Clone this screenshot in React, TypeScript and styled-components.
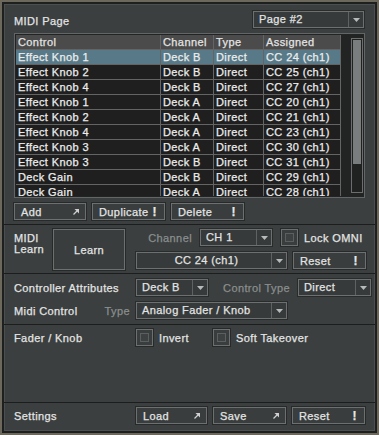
import React from 'react';
import styled, { createGlobalStyle } from 'styled-components';

const GlobalStyle = createGlobalStyle`
  html, body {
    margin: 0;
    padding: 0;
    background: #6c695c;
  }
  body {
    font-family: "Liberation Sans", Arial, sans-serif;
    font-size: 11px;
    letter-spacing: 0.4px;
    -webkit-text-stroke: 0.25px currentColor;
    color: #e4e4e4;
  }
`;

type Row = { control: string; channel: string; type: string; assigned: string };

const rows: Row[] = [
    { control: 'Effect Knob 1', channel: 'Deck B', type: 'Direct', assigned: 'CC 24 (ch1)' },
    { control: 'Effect Knob 2', channel: 'Deck B', type: 'Direct', assigned: 'CC 25 (ch1)' },
    { control: 'Effect Knob 4', channel: 'Deck B', type: 'Direct', assigned: 'CC 27 (ch1)' },
    { control: 'Effect Knob 1', channel: 'Deck A', type: 'Direct', assigned: 'CC 20 (ch1)' },
    { control: 'Effect Knob 2', channel: 'Deck A', type: 'Direct', assigned: 'CC 21 (ch1)' },
    { control: 'Effect Knob 4', channel: 'Deck A', type: 'Direct', assigned: 'CC 23 (ch1)' },
    { control: 'Effect Knob 3', channel: 'Deck A', type: 'Direct', assigned: 'CC 30 (ch1)' },
    { control: 'Effect Knob 3', channel: 'Deck B', type: 'Direct', assigned: 'CC 31 (ch1)' },
    { control: 'Deck Gain', channel: 'Deck B', type: 'Direct', assigned: 'CC 29 (ch1)' },
    { control: 'Deck Gain', channel: 'Deck A', type: 'Direct', assigned: 'CC 28 (ch1)' },
];

const ExtIcon = () => (
    <svg width="6" height="6" viewBox="0 0 6 6">
        <polygon points="1.5,0 6,0 6,4.5" fill="#d0d0d0" />
        <line x1="0.5" y1="5.5" x2="4" y2="2" stroke="#d0d0d0" strokeWidth="1.2" />
    </svg>
);

const Caret = () => (
    <svg width="7" height="4" viewBox="0 0 7 4">
        <polygon points="0,0 7,0 3.5,4" fill="#b8baba" />
    </svg>
);

export default function App() {
    return (
        <>
            <GlobalStyle />
            <Frame>
                <Section $height={221} $top={7}>
                    <HeadRow>
                        <HeadLabel>MIDI Page</HeadLabel>
                        <Select $w={111}>
                            <SelectText>Page #2</SelectText>
                            <SelectArrow><Caret /></SelectArrow>
                        </Select>
                    </HeadRow>
                    <TableBox>
                        <GridClip>
                            <Grid>
                                <HeadCell>Control</HeadCell>
                                <HeadCell>Channel</HeadCell>
                                <HeadCell>Type</HeadCell>
                                <HeadCell>Assigned</HeadCell>
                                {rows.map((r, i) => (
                                    <React.Fragment key={i}>
                                        <Cell $sel={i === 0}>{r.control}</Cell>
                                        <Cell $sel={i === 0}>{r.channel}</Cell>
                                        <Cell $sel={i === 0}>{r.type}</Cell>
                                        <Cell $sel={i === 0}>{r.assigned}</Cell>
                                    </React.Fragment>
                                ))}
                            </Grid>
                        </GridClip>
                        <Track>
                            <Thumb />
                        </Track>
                    </TableBox>
                    <ButtonRow>
                        <Btn $w={72}>Add<ExtIcon /></Btn>
                        <Btn $w={73}>Duplicate<Bang>!</Bang></Btn>
                        <Btn $w={73}>Delete<Bang>!</Bang></Btn>
                    </ButtonRow>
                </Section>

                <Section $height={49} $top={4}>
                    <LearnRow>
                        <LearnLabel>MIDI<br />Learn</LearnLabel>
                        <LearnBtn>Learn</LearnBtn>
                        <LearnSide>
                            <Line>
                                <DimLabel $w={64}>Channel</DimLabel>
                                <Select $w={72}>
                                    <SelectText>CH 1</SelectText>
                                    <SelectArrow><Caret /></SelectArrow>
                                </Select>
                                <Check $ml={3} />
                                <CheckText>Lock OMNI</CheckText>
                            </Line>
                            <Line>
                                <Select $w={151}>
                                    <SelectText $center>CC 24 (ch1)</SelectText>
                                    <SelectArrow><Caret /></SelectArrow>
                                </Select>
                                <Btn $w={73}>Reset<Bang>!</Bang></Btn>
                            </Line>
                        </LearnSide>
                    </LearnRow>
                </Section>

                <Section $height={51} $top={5}>
                    <Stack>
                        <Line>
                            <RowLabel>Controller Attributes</RowLabel>
                            <Select $w={72}>
                                <SelectText>Deck B</SelectText>
                                <SelectArrow><Caret /></SelectArrow>
                            </Select>
                            <DimLabel $w={84}>Control Type</DimLabel>
                            <Select $w={73}>
                                <SelectText>Direct</SelectText>
                                <SelectArrow><Caret /></SelectArrow>
                            </Select>
                        </Line>
                        <Line>
                            <RowLabel>
                                Midi Control
                                <DimInline>Type</DimInline>
                            </RowLabel>
                            <Select $w={151}>
                                <SelectText>Analog Fader / Knob</SelectText>
                                <SelectArrow><Caret /></SelectArrow>
                            </Select>
                        </Line>
                    </Stack>
                </Section>

                <Section $height={78} $top={4}>
                    <Line>
                        <RowLabel $alignTop>Fader / Knob</RowLabel>
                        <CheckGroup $w={71}>
                            <Check />
                            <CheckText>Invert</CheckText>
                        </CheckGroup>
                        <CheckGroup>
                            <Check />
                            <CheckText>Soft Takeover</CheckText>
                        </CheckGroup>
                    </Line>
                </Section>

                <LastSection>
                    <Line>
                        <RowLabel>Settings</RowLabel>
                        <Btn $w={71}>Load<ExtIcon /></Btn>
                        <Btn $w={73}>Save<ExtIcon /></Btn>
                        <Btn $w={73}>Reset<Bang>!</Bang></Btn>
                    </Line>
                </LastSection>
            </Frame>
        </>
    );
}

const Frame = styled.div`
    margin: 2px;
    width: 375px;
    height: 431px;
    box-sizing: border-box;
    border: 2px solid #1e2020;
    box-shadow: inset 0 0 0 1px #4b4f4f;
    background: #3b3f3f;
    display: flex;
    flex-direction: column;
`

const Section = styled.section<{ $height: number; $top: number }>`
    height: ${p => p.$height}px;
    flex: none;
    box-sizing: border-box;
    padding: ${p => p.$top}px 11px 0 10px;
    border-bottom: 1px solid #1c1e1e;
    display: flex;
    flex-direction: column;
`

const LastSection = styled.section`
    flex: 1;
    padding: 4px 11px 0 10px;
`

const HeadRow = styled.div`
    display: flex;
    align-items: center;
    justify-content: space-between;
    height: 17px;
`

const HeadLabel = styled.span`
    padding-top: 2px;
`

const Select = styled.div<{ $w: number }>`
    width: ${p => p.$w}px;
    height: 17px;
    box-sizing: border-box;
    flex: none;
    display: flex;
    border: 1px solid #6c7070;
    box-shadow: 0 0 0 1px #2a2c2c;
    background: #363a3a;
`

const SelectText = styled.span<{ $center?: boolean }>`
    flex: 1;
    padding-left: 5px;
    line-height: 15px;
    text-align: ${p => (p.$center ? 'center' : 'left')};
    white-space: nowrap;
`

const SelectArrow = styled.span`
    width: 14px;
    border-left: 1px solid #5e6262;
    display: flex;
    align-items: center;
    justify-content: center;
`

const TableBox = styled.div`
    margin-top: 5px;
    width: 351px;
    height: 165px;
    box-sizing: border-box;
    border: 1px solid #626666;
    padding: 1px;
    background: #222424;
    display: flex;
    justify-content: space-between;
    align-items: flex-start;
`

const GridClip = styled.div`
    height: 161px;
    overflow: hidden;
`

const Grid = styled.div`
    display: grid;
    grid-template-columns: 144px 52px 49px 76px;
    grid-auto-rows: 14px;
    gap: 1px;
    background: #646464;
    border-right: 1px solid #646464;
    border-bottom: 1px solid #646464;
`

const HeadCell = styled.div`
    background: #4b4b4b;
    padding-left: 2px;
    line-height: 14px;
    white-space: nowrap;
    overflow: hidden;
`

const Cell = styled.div<{ $sel: boolean }>`
    background: ${p => (p.$sel ? '#587a88' : '#1f1f1f')};
    color: #ededed;
    padding-left: 2px;
    line-height: 14px;
    white-space: nowrap;
    overflow: hidden;
`

const Track = styled.div`
    margin-top: 3px;
    width: 12px;
    height: 155px;
    box-sizing: border-box;
    border: 1px solid #6a6e6e;
    padding: 1px;
    background: #202222;
`

const Thumb = styled.div`
    height: 124px;
    background: #797d7d;
`

const ButtonRow = styled.div`
    margin-top: 5px;
    display: flex;
    gap: 6px;
`

const Btn = styled.button<{ $w: number }>`
    width: ${p => p.$w}px;
    height: 17px;
    flex: none;
    box-sizing: border-box;
    border: 1px solid #6c7070;
    box-shadow: 0 0 0 1px #282a2a;
    background: #393d3d;
    color: #e4e4e4;
    font: inherit;
    letter-spacing: inherit;
    padding: 0 6px 0 6px;
    display: flex;
    align-items: center;
    justify-content: space-between;
`

const Bang = styled.span`
    font-size: 12px;
    font-weight: bold;
    color: #e8e8e8;
    padding-right: 1px;
`

const LearnRow = styled.div`
    display: flex;
    align-items: flex-start;
`

const LearnLabel = styled.span`
    width: 39px;
    flex: none;
    margin-top: 4px;
    line-height: 11px;
`

const LearnBtn = styled.button`
    width: 72px;
    height: 41px;
    flex: none;
    box-sizing: border-box;
    border: 1px solid #6c7070;
    box-shadow: 0 0 0 1px #282a2a;
    background: #393d3d;
    color: #e4e4e4;
    font: inherit;
    letter-spacing: inherit;
`

const LearnSide = styled.div`
    margin-left: 11px;
    display: flex;
    flex-direction: column;
    gap: 6px;
`

const Line = styled.div`
    display: flex;
    align-items: center;
    gap: 6px;
`

const Stack = styled.div`
    display: flex;
    flex-direction: column;
    gap: 6px;
`

const DimLabel = styled.span<{ $w: number }>`
    width: ${p => p.$w}px;
    flex: none;
    box-sizing: border-box;
    text-align: right;
    color: #8a8e8e;
    margin-right: -6px;
    padding-right: 8px;
`

const DimInline = styled.span`
    color: #8a8e8e;
`

const RowLabel = styled.span<{ $alignTop?: boolean }>`
    width: 116px;
    flex: none;
    display: flex;
    justify-content: space-between;
    align-self: ${p => (p.$alignTop ? 'flex-start' : 'center')};
    margin-top: ${p => (p.$alignTop ? '3px' : '0')};
    white-space: nowrap;
`

const CheckGroup = styled.div<{ $w?: number }>`
    width: ${p => (p.$w ? `${p.$w}px` : 'auto')};
    flex: none;
    display: flex;
    align-items: center;
    gap: 6px;
`

const Check = styled.span<{ $ml?: number }>`
    width: 17px;
    height: 17px;
    flex: none;
    margin-left: ${p => p.$ml ?? 0}px;
    box-sizing: border-box;
    border: 1px solid #6c7070;
    box-shadow: 0 0 0 1px #282a2a;
    background: #393d3d;
    display: flex;
    align-items: center;
    justify-content: center;
    &::after {
        content: '';
        width: 7px;
        height: 7px;
        border: 1px solid #5b5f5f;
        background: #3d4141;
    }
`

const CheckText = styled.span`
    white-space: nowrap;
`
